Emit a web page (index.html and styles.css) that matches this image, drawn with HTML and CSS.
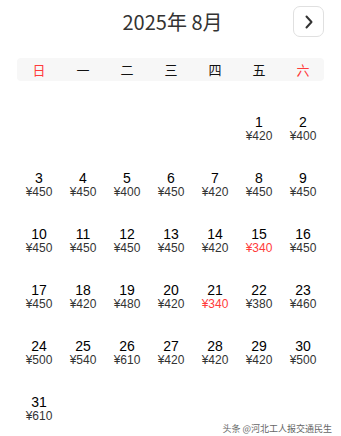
FILE: index.html
```html
<!DOCTYPE html>
<html lang="zh">
<head>
<meta charset="utf-8">
<link rel="stylesheet" href="styles.css">
</head>
<body>
<div class="cal">
  <header class="head">
    <h1 class="title">2025年 8月</h1>
    <button class="next" aria-label="下个月">
      <svg width="10" height="14" viewBox="0 0 10 14"><path d="M2.5 1.5 L7.5 7 L2.5 12.5" fill="none" stroke="#333" stroke-width="2" stroke-linecap="round" stroke-linejoin="round"/></svg>
    </button>
  </header>
  <div class="week">
    <span class="we">日</span><span>一</span><span>二</span><span>三</span><span>四</span><span>五</span><span class="we">六</span>
  </div>
  <div class="days">
    <div class="cell"></div><div class="cell"></div><div class="cell"></div><div class="cell"></div><div class="cell"></div>
    <div class="cell"><span class="d">1</span><span class="p">¥420</span></div>
    <div class="cell"><span class="d">2</span><span class="p">¥400</span></div>
    <div class="cell"><span class="d">3</span><span class="p">¥450</span></div>
    <div class="cell"><span class="d">4</span><span class="p">¥450</span></div>
    <div class="cell"><span class="d">5</span><span class="p">¥400</span></div>
    <div class="cell"><span class="d">6</span><span class="p">¥450</span></div>
    <div class="cell"><span class="d">7</span><span class="p">¥420</span></div>
    <div class="cell"><span class="d">8</span><span class="p">¥450</span></div>
    <div class="cell"><span class="d">9</span><span class="p">¥450</span></div>
    <div class="cell"><span class="d">10</span><span class="p">¥450</span></div>
    <div class="cell"><span class="d">11</span><span class="p">¥450</span></div>
    <div class="cell"><span class="d">12</span><span class="p">¥450</span></div>
    <div class="cell"><span class="d">13</span><span class="p">¥450</span></div>
    <div class="cell"><span class="d">14</span><span class="p">¥420</span></div>
    <div class="cell"><span class="d">15</span><span class="p low">¥340</span></div>
    <div class="cell"><span class="d">16</span><span class="p">¥450</span></div>
    <div class="cell"><span class="d">17</span><span class="p">¥450</span></div>
    <div class="cell"><span class="d">18</span><span class="p">¥420</span></div>
    <div class="cell"><span class="d">19</span><span class="p">¥480</span></div>
    <div class="cell"><span class="d">20</span><span class="p">¥420</span></div>
    <div class="cell"><span class="d">21</span><span class="p low">¥340</span></div>
    <div class="cell"><span class="d">22</span><span class="p">¥380</span></div>
    <div class="cell"><span class="d">23</span><span class="p">¥460</span></div>
    <div class="cell"><span class="d">24</span><span class="p">¥500</span></div>
    <div class="cell"><span class="d">25</span><span class="p">¥540</span></div>
    <div class="cell"><span class="d">26</span><span class="p">¥610</span></div>
    <div class="cell"><span class="d">27</span><span class="p">¥420</span></div>
    <div class="cell"><span class="d">28</span><span class="p">¥420</span></div>
    <div class="cell"><span class="d">29</span><span class="p">¥420</span></div>
    <div class="cell"><span class="d">30</span><span class="p">¥500</span></div>
    <div class="cell"><span class="d">31</span><span class="p">¥610</span></div>
  </div>
  <div class="mark">头条 @河北工人报交通民生</div>
</div>
</body>
</html>
```
FILE: styles.css
```css
* { box-sizing: border-box; }
html, body { margin: 0; padding: 0; background: #fff; }
body {
  font-family: "Noto Sans CJK SC", "Noto Sans", sans-serif;
  color: #000;
  width: 341px;
  height: 436px;
  overflow: hidden;
}
.cal {
  position: relative;
  height: 436px;
  padding: 6px 17px 0 17px;
}
.head {
  position: relative;
  height: 31px;
  display: flex;
  justify-content: center;
  align-items: center;
}
.title {
  margin: 0;
  font-size: 20px;
  font-weight: 400;
  color: #333;
  line-height: 31px;
  padding-left: 4px;
}
.next {
  position: absolute;
  right: 0;
  top: 0;
  width: 31px;
  height: 31px;
  border: 1px solid #e0e0e0;
  border-radius: 7px;
  background: #fff;
  display: flex;
  align-items: center;
  justify-content: center;
  padding: 0;
}
.week {
  margin-top: 21px;
  height: 23px;
  background: #f7f7f7;
  border-radius: 4px;
  display: grid;
  grid-template-columns: repeat(7, 44px);
  align-items: center;
  font-size: 13px;
  line-height: 23px;
  color: #111;
}
.week span { text-align: center; }
.week .we { color: #ff3b3b; }
.days {
  margin-top: 20px;
  display: grid;
  grid-template-columns: repeat(7, 44px);
  grid-auto-rows: 56px;
}
.cell {
  display: flex;
  flex-direction: column;
  align-items: center;
  padding-top: 13px;
  font-family: "Liberation Sans", Arial, sans-serif;
}
.d { font-size: 14px; line-height: normal; color: #000; }
.p { font-size: 12px; line-height: normal; color: #333; margin-top: -1px; }
.p.low { color: #ff3b3b; }
.mark {
  position: absolute;
  right: 9px;
  bottom: 1px;
  font-size: 9px;
  color: #666;
}
```
